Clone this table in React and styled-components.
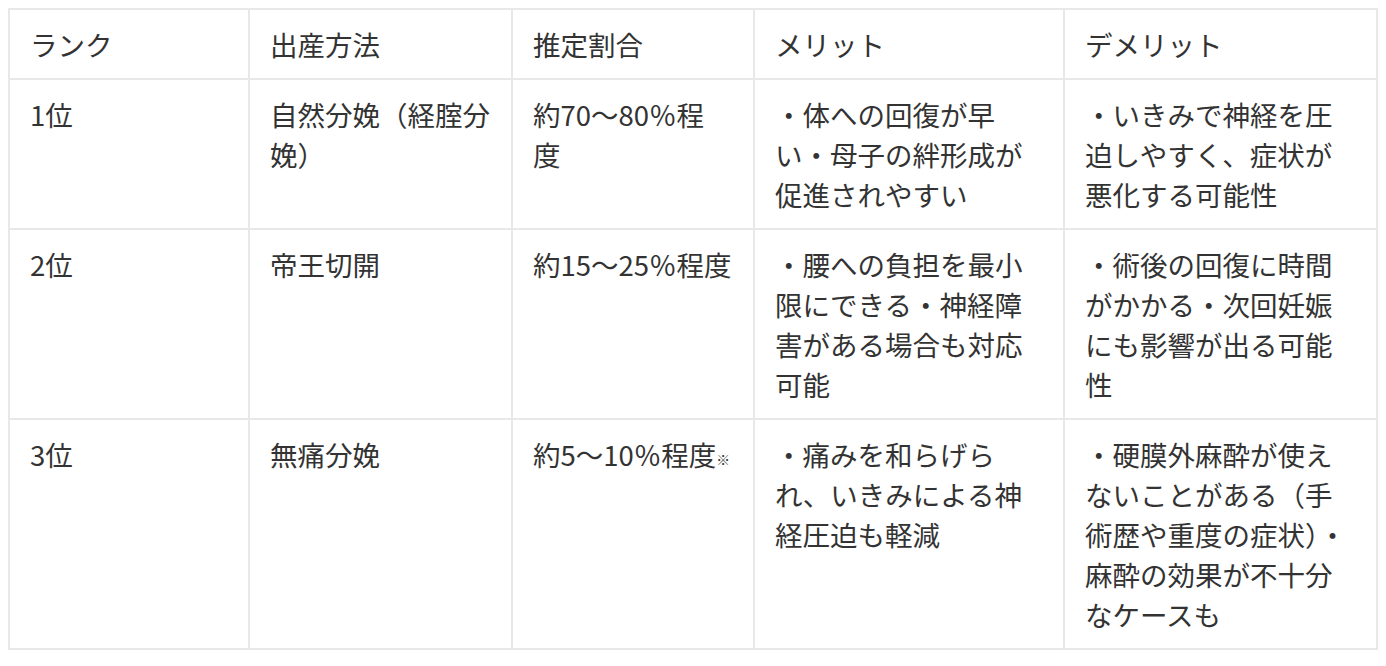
import React from "react";
import styled, { createGlobalStyle } from "styled-components";

const GlobalStyle = createGlobalStyle`
    body {
        margin: 8px;
        background: #ffffff;
        font-family: "Noto Sans CJK JP", "Noto Sans", sans-serif;
        color: #333333;
    }
`;

const Table = styled.table`
    width: 1368px;
    border-collapse: collapse;
    table-layout: fixed;
    font-size: 27.5px;
    line-height: 40px;
`;

const Cell = styled.td`
    border: 2px solid #e8e8e8;
    padding: 14px 19px 14px 20px;
    vertical-align: top;
    text-align: left;
    font-weight: 400;
    word-break: break-all;
`;

const HeadCell = styled(Cell).attrs({ as: "th" })``;

const Note = styled.span`
    font-size: 0.5em;
    vertical-align: 1px;
`;

const widths = [240, 263, 242, 310, 313];

const headers = ["ランク", "出産方法", "推定割合", "メリット", "デメリット"];

const rows = [
    [
        "1位",
        "自然分娩（経腟分娩）",
        <>
            約70〜80％程
            <br />度
        </>,
        "・体への回復が早い・母子の絆形成が促進されやすい",
        "・いきみで神経を圧迫しやすく、症状が悪化する可能性",
    ],
    [
        "2位",
        "帝王切開",
        "約15〜25％程度",
        "・腰への負担を最小限にできる・神経障害がある場合も対応可能",
        "・術後の回復に時間がかかる・次回妊娠にも影響が出る可能性",
    ],
    [
        "3位",
        "無痛分娩",
        <>
            約5〜10％程度<Note>※</Note>
        </>,
        "・痛みを和らげられ、いきみによる神経圧迫も軽減",
        "・硬膜外麻酔が使えないことがある（手術歴や重度の症状）・麻酔の効果が不十分なケースも",
    ],
];

export default function App() {
    return (
        <>
            <GlobalStyle />
            <Table>
                <colgroup>
                    {widths.map((w, i) => (
                        <col key={i} style={{ width: w }} />
                    ))}
                </colgroup>
                <thead>
                    <tr>
                        {headers.map((h) => (
                            <HeadCell key={h}>{h}</HeadCell>
                        ))}
                    </tr>
                </thead>
                <tbody>
                    {rows.map((r, i) => (
                        <tr key={i}>
                            {r.map((c, j) => (
                                <Cell key={j}>{c}</Cell>
                            ))}
                        </tr>
                    ))}
                </tbody>
            </Table>
        </>
    );
}
